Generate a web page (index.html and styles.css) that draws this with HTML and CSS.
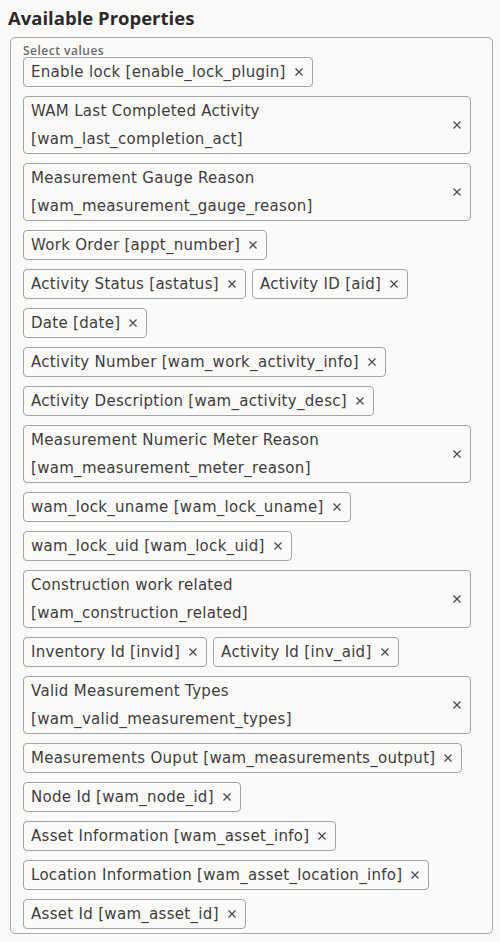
FILE: index.html
```html
<!doctype html>
<html>
<head>
  <link rel="stylesheet" href="styles.css">
</head>
<body>
  <h2 class="title">Available Properties</h2>
  <div class="selectBox">
    <div class="label">Select values</div>
    <div class="chips" id="chips"></div>
  </div>

  <script>
    var allValues = ['Enable lock [enable_lock_plugin]',
        'WAM Last Completed Activity [wam_last_completion_act]',
        'Measurement Gauge Reason [wam_measurement_gauge_reason]',
        'Work Order [appt_number]',
        'Activity Status [astatus]',
        'Activity ID [aid]',
        'Date [date]',
        'Activity Number [wam_work_activity_info]',
        'Activity Description [wam_activity_desc]',
        'Measurement Numeric Meter Reason [wam_measurement_meter_reason]',
        'wam_lock_uname [wam_lock_uname]',
        'wam_lock_uid [wam_lock_uid]',
        'Construction work related [wam_construction_related]',
        'Inventory Id [invid]',
        'Activity Id [inv_aid]',
        'Valid Measurement Types [wam_valid_measurement_types]',
        'Measurements Ouput [wam_measurements_output]',
        'Node Id [wam_node_id]',
        'Asset Information [wam_asset_info]',
        'Location Information [wam_asset_location_info]',
        'Asset Id [wam_asset_id]']

    var cross = "<svg class='x' width='10' height='10' viewBox='0 0 10 10'>" +
      "<path d='M1.5 1.5 L8.5 8.5 M8.5 1.5 L1.5 8.5' stroke='#4a4a4a' stroke-width='1.3' fill='none'/></svg>";

    var markup = "";
    for(var i = 0; i < allValues.length; i++){
      markup += "<div class='chip'><span class='text'>" + allValues[i] + "</span>" + cross + "</div>";
    }
    document.getElementById("chips").innerHTML = markup;
  </script>
</body>
</html>
```

FILE: styles.css
```css
body{
  margin: 0;
  padding: 0 7px 0 10px;
  background-color: #fbfaf9;
  font-family: "DejaVu Sans", "Open Sans", sans-serif;
  color: #3d3d3d;
}
.title{
  margin: 0 0 0 -2px;
  padding: 5px 0 0 0;
  height: 37px;
  box-sizing: border-box;
  font-family: "Open Sans", sans-serif;
  font-size: 18.5px;
  font-weight: bold;
  color: #2a2a2a;
}
.selectBox{
  border: 1px solid #a9a9a9;
  border-radius: 5px;
  padding: 6px 21px 4px 12px;
  box-sizing: border-box;
}
.label{
  font-family: "Open Sans", sans-serif;
  font-size: 12px;
  font-weight: 600;
  letter-spacing: 0.5px;
  line-height: 13px;
  color: #6b6b6b;
}
.chips{
  display: flex;
  flex-wrap: wrap;
  gap: 9px 6px;
}
.chip{
  display: flex;
  align-items: center;
  border: 1px solid #a3a3a3;
  border-radius: 4px;
  padding: 0 8px 0 7px;
  font-size: 15px;
  letter-spacing: 0.3px;
  line-height: 28px;
  box-sizing: border-box;
  max-width: 100%;
}
.chip .text{
  flex: 1;
}
.chip .x{
  margin-left: 8px;
  flex-shrink: 0;
}
```
